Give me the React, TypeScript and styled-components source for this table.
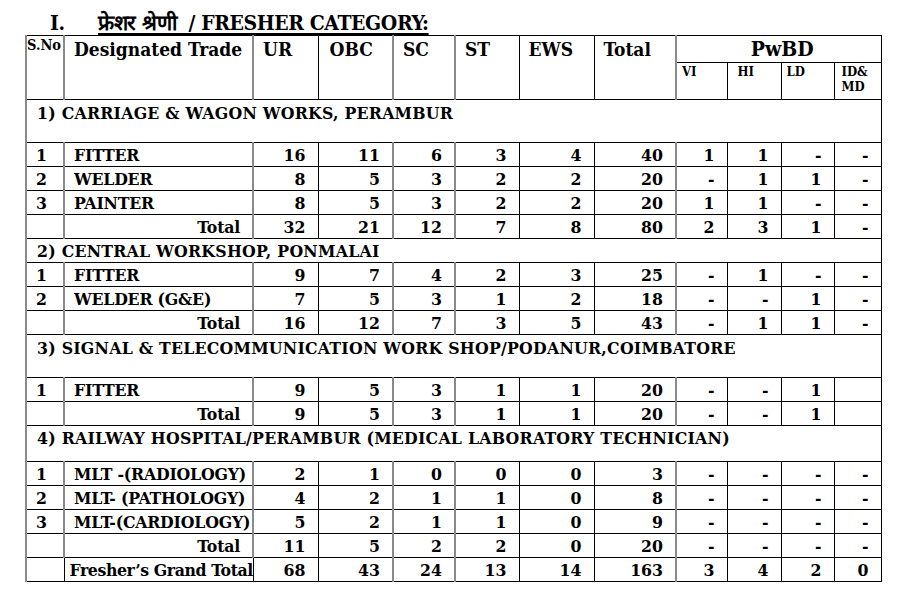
import React from 'react';
import styled, { createGlobalStyle } from 'styled-components';

const GlobalStyle = createGlobalStyle`
  html, body {
    margin: 0;
    padding: 0;
    background: #fff;
  }
  body {
    font-family: 'DejaVu Serif Condensed', 'DejaVu Serif', serif;
    font-weight: bold;
    color: #000;
  }
`;

const Page = styled.div`
  width: 899px;
  height: 600px;
  overflow: hidden;
`;

const Title = styled.h1`
  margin: 0;
  height: 35px;
  display: flex;
  align-items: flex-end;
  padding-left: 50px;
  font-size: 21px;
  line-height: 24px;
  font-weight: bold;
  letter-spacing: -0.4px;
`;

const Roman = styled.span`
  width: 48px;
`;

const Heading = styled.span`
  text-decoration: underline;
  text-decoration-thickness: 2px;
  text-underline-offset: 3px;
  white-space: pre;
`;

const Table = styled.table`
  border-collapse: collapse;
  table-layout: fixed;
  width: 855px;
  margin-left: 25px;
`;

const Row = styled.tr<{ $h: number }>`
  height: ${(p) => p.$h}px;
`;

const Th = styled.th<{ $size?: number; $align?: string; $grey?: boolean; $pl?: number }>`
  border: 1px solid #000;
  ${(p) => (p.$grey ? 'border-right: 2px solid #8a8a8a;' : '')}
  vertical-align: top;
  text-align: ${(p) => p.$align || 'left'};
  padding: 1px 2px 0 ${(p) => (p.$pl ?? 9)}px;
  font-size: ${(p) => p.$size || 19}px;
  line-height: ${(p) => (p.$size && p.$size < 15 ? 15 : 24)}px;
  font-weight: bold;
  white-space: nowrap;
`;

const Td = styled.td<{ $align?: string; $grey?: boolean; $first?: boolean }>`
  border: 1px solid #000;
  ${(p) => (p.$grey ? 'border-right: 2px solid #8a8a8a;' : '')}
  ${(p) => (p.$first ? 'border-left: 2px solid #8a8a8a;' : '')}
  text-align: ${(p) => p.$align || 'right'};
  vertical-align: middle;
  padding: 0 12px 0 9px;
  font-size: 17.5px;
  line-height: 22px;
  white-space: nowrap;
`;

const TradeCell = styled(Td)`
  letter-spacing: -0.2px;
`;

const GrandLabel = styled(Td)`
  padding: 0 0 0 5px;
  text-align: left;
  letter-spacing: -0.4px;
`;

const SectionCell = styled.td<{ $pt: number }>`
  border: 1px solid #000;
  border-left: 2px solid #8a8a8a;
  vertical-align: top;
  text-align: left;
  padding: ${(p) => p.$pt}px 0 0 10px;
  font-size: 17.5px;
  line-height: 22px;
  letter-spacing: 0.25px;
  white-space: nowrap;
`;

type Entry = { sno?: string; trade: string; v: string[]; total?: boolean };
type Section = { title: string; h: number; pt: number; rows: Entry[] };

const widths = [38, 189, 65, 75, 62, 64, 75, 82, 51, 54, 53, 47];
const greyRight = [true, true, false, true, true, false, false, true, false, false, false, false];

const sections: Section[] = [
  {
    title: '1) CARRIAGE & WAGON WORKS, PERAMBUR',
    h: 43,
    pt: 2,
    rows: [
      { sno: '1', trade: 'FITTER', v: ['16', '11', '6', '3', '4', '40', '1', '1', '-', '-'] },
      { sno: '2', trade: 'WELDER', v: ['8', '5', '3', '2', '2', '20', '-', '1', '1', '-'] },
      { sno: '3', trade: 'PAINTER', v: ['8', '5', '3', '2', '2', '20', '1', '1', '-', '-'] },
      { trade: 'Total', total: true, v: ['32', '21', '12', '7', '8', '80', '2', '3', '1', '-'] },
    ],
  },
  {
    title: '2) CENTRAL WORKSHOP, PONMALAI',
    h: 24,
    pt: 1,
    rows: [
      { sno: '1', trade: 'FITTER', v: ['9', '7', '4', '2', '3', '25', '-', '1', '-', '-'] },
      { sno: '2', trade: 'WELDER (G&E)', v: ['7', '5', '3', '1', '2', '18', '-', '-', '1', '-'] },
      { trade: 'Total', total: true, v: ['16', '12', '7', '3', '5', '43', '-', '1', '1', '-'] },
    ],
  },
  {
    title: '3) SIGNAL & TELECOMMUNICATION WORK SHOP/PODANUR,COIMBATORE',
    h: 43,
    pt: 2,
    rows: [
      { sno: '1', trade: 'FITTER', v: ['9', '5', '3', '1', '1', '20', '-', '-', '1', ''] },
      { trade: 'Total', total: true, v: ['9', '5', '3', '1', '1', '20', '-', '-', '1', ''] },
    ],
  },
  {
    title: '4) RAILWAY HOSPITAL/PERAMBUR (MEDICAL LABORATORY TECHNICIAN)',
    h: 36,
    pt: 1,
    rows: [
      { sno: '1', trade: 'MLT -(RADIOLOGY)', v: ['2', '1', '0', '0', '0', '3', '-', '-', '-', '-'] },
      { sno: '2', trade: 'MLT- (PATHOLOGY)', v: ['4', '2', '1', '1', '0', '8', '-', '-', '-', '-'] },
      { sno: '3', trade: 'MLT-(CARDIOLOGY)', v: ['5', '2', '1', '1', '0', '9', '-', '-', '-', '-'] },
      { trade: 'Total', total: true, v: ['11', '5', '2', '2', '0', '20', '-', '-', '-', '-'] },
    ],
  },
];

const grand = ['68', '43', '24', '13', '14', '163', '3', '4', '2', '0'];

const Values: React.FC<{ v: string[] }> = ({ v }) => (
  <>
    {v.map((x, i) => (
      <Td key={i} $grey={greyRight[i + 2]}>
        {x}
      </Td>
    ))}
  </>
);

const App: React.FC = () => (
  <Page>
    <GlobalStyle />
    <Title>
      <Roman>I.</Roman>
      <Heading>{'फ्रेशर श्रेणी  / FRESHER CATEGORY:'}</Heading>
    </Title>
    <Table>
      <colgroup>
        {widths.map((w, i) => (
          <col key={i} style={{ width: w }} />
        ))}
      </colgroup>
      <thead>
        <Row $h={27}>
          <Th rowSpan={2} $size={14.5} $pl={0} $grey style={{ borderLeft: '2px solid #8a8a8a' }}>
            S.No
          </Th>
          <Th rowSpan={2} $grey>Designated Trade</Th>
          <Th rowSpan={2}>UR</Th>
          <Th rowSpan={2} $grey $pl={11}>OBC</Th>
          <Th rowSpan={2} $grey>SC</Th>
          <Th rowSpan={2}>ST</Th>
          <Th rowSpan={2}>EWS</Th>
          <Th rowSpan={2} $grey>Total</Th>
          <Th colSpan={4} $align="center" $size={21}>PwBD</Th>
        </Row>
        <Row $h={37}>
          <Th $size={13} $pl={5}>VI</Th>
          <Th $size={13} $pl={10}>HI</Th>
          <Th $size={13} $pl={5}>LD</Th>
          <Th $size={13} $pl={7}>
            ID&amp;
            <br />
            MD
          </Th>
        </Row>
      </thead>
      <tbody>
        {sections.map((s) => (
          <React.Fragment key={s.title}>
            <Row $h={s.h}>
              <SectionCell colSpan={12} $pt={s.pt}>{s.title}</SectionCell>
            </Row>
            {s.rows.map((r, i) => (
              <Row $h={24} key={i}>
                <Td $align="left" $grey $first>{r.sno || ''}</Td>
                <TradeCell $align={r.total ? 'right' : 'left'} $grey>{r.trade}</TradeCell>
                <Values v={r.v} />
              </Row>
            ))}
          </React.Fragment>
        ))}
        <Row $h={24}>
          <Td $first />
          <GrandLabel>Fresher’s Grand Total</GrandLabel>
          <Values v={grand} />
        </Row>
      </tbody>
    </Table>
  </Page>
);

export default App;
